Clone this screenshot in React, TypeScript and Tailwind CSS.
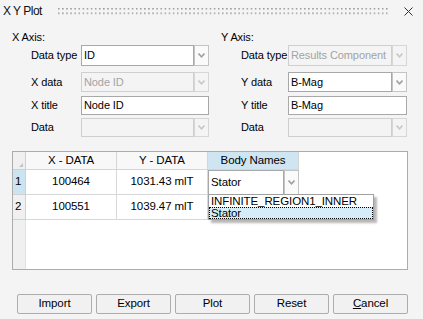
import type { ReactNode } from "react";

function Chevron({ dim = false }: { dim?: boolean }) {
  return (
    <svg width="7" height="5" viewBox="0 0 7 5">
      <path d="M0.5 0.5 L3.5 3.8 L6.5 0.5" fill="none" stroke={dim ? "#c8c8c8" : "#a0a0a0"} strokeWidth="1.6" />
    </svg>
  );
}

interface ComboProps {
  value?:    string;
  width:     number;   // total width incl. button
  height?:   number;
  disabled?: boolean;
}

function Combo({ value = "", width, height = 21, disabled = false }: ComboProps) {
  return (
    <div className="flex" style={{ width, height }}>
      <div
        className={
          disabled
            ? "flex flex-1 items-center whitespace-nowrap border border-[#cfcfcf] bg-[#f4f4f4] pl-[2px] text-[#a3a3a3]"
            : "flex flex-1 items-center whitespace-nowrap border border-[#a8a8a8] bg-white pl-[2px]"
        }
      >
        {value}
      </div>
      <div
        className={
          disabled
            ? "flex w-[15px] items-center justify-center border border-[#d6d6d6] bg-[#f4f4f4]"
            : "flex w-[15px] items-center justify-center border border-[#c4c4c4] bg-[#fafafa]"
        }
      >
        <Chevron dim={disabled} />
      </div>
    </div>
  );
}

function TextBox({ value, width, height = 19 }: { value: string; width: number; height?: number }) {
  return (
    <div className="flex items-center border border-[#a8a8a8] bg-white pl-[2px]" style={{ width, height }}>
      {value}
    </div>
  );
}

function Row({ label, labelW, children, className = "" }: { label: string; labelW: number; children: ReactNode; className?: string }) {
  return (
    <div className={`flex items-center ${className}`}>
      <span className="shrink-0 whitespace-nowrap" style={{ width: labelW }}>{label}</span>
      {children}
    </div>
  );
}

const BUTTONS = ["Import", "Export", "Plot", "Reset"];

export default function App() {
  return (
    <div className="flex h-[319px] w-[423px] flex-col overflow-hidden bg-[#f4f4f4] font-['Liberation_Sans',Arial,sans-serif] text-[11px] tracking-[-0.1px] text-black">
      {/* title bar */}
      <div className="flex h-[22px] items-center pl-[3px] pr-[10px]">
        <span className="text-[12px] tracking-[-0.5px] text-[#111]">X Y Plot</span>
        <svg className="ml-[16px] mr-[10px]" width="332" height="7" viewBox="0 0 332 7">
          <defs>
            <pattern id="grip" width="4.1" height="4.5" patternUnits="userSpaceOnUse">
              <rect x="0" y="0" width="1.5" height="1.5" fill="#9a9a9a" />
            </pattern>
          </defs>
          <rect x="0" y="0" width="332" height="7" fill="url(#grip)" />
        </svg>
        <svg width="9" height="9" viewBox="0 0 9 9" className="ml-auto">
          <path d="M0.5 0.5 L8.5 8.5 M8.5 0.5 L0.5 8.5" stroke="#333" strokeWidth="1" />
        </svg>
      </div>

      {/* axis settings */}
      <div className="mt-[8px] flex">
        <div className="w-[209px] pl-[12px]">
          <div className="h-[14px] leading-[14px]">X Axis:</div>
          <div className="pl-[19px]">
            <Row label="Data type" labelW={50} className="mt-[1px]"><Combo value="ID" width={128} /></Row>
            <Row label="X data" labelW={50} className="mt-[6px]"><Combo value="Node ID" width={128} height={20} disabled /></Row>
            <Row label="X title" labelW={50} className="mt-[4px]"><TextBox value="Node ID" width={128} /></Row>
            <Row label="Data" labelW={50} className="mt-[3px]"><Combo width={128} height={19} disabled /></Row>
          </div>
        </div>
        <div className="pl-[12px]">
          <div className="h-[14px] leading-[14px]">Y Axis:</div>
          <div className="pl-[20px]">
            <Row label="Data type" labelW={47} className="mt-[1px]"><Combo value="Results Component" width={119} disabled /></Row>
            <Row label="Y data" labelW={47} className="mt-[6px]"><Combo value="B-Mag" width={119} height={20} /></Row>
            <Row label="Y title" labelW={47} className="mt-[4px]"><TextBox value="B-Mag" width={119} /></Row>
            <Row label="Data" labelW={47} className="mt-[3px]"><Combo width={119} height={19} disabled /></Row>
          </div>
        </div>
      </div>

      {/* grid */}
      <div className="relative mx-[12px] mt-[14px] flex h-[119px] w-[396px] flex-col border border-[#acacac] bg-white text-[11.5px]">
        <div className="flex h-[18px]">
          <div className="relative w-[13px] border-r border-b border-[#d0d0d0] bg-[#f0f0f0]">
            <svg className="absolute bottom-[2px] right-[2px]" width="4" height="4" viewBox="0 0 4 4">
              <path d="M4 0 L4 4 L0 4 Z" fill="#c4c4c4" />
            </svg>
          </div>
          <div className="flex w-[91px] items-center justify-center border-r border-b border-[#d5d5d5] bg-[#f8f8f8]">X - DATA</div>
          <div className="flex w-[91px] items-center justify-center border-r border-b border-[#d5d5d5] bg-[#f8f8f8]">Y - DATA</div>
          <div className="flex w-[91px] items-center justify-center border-r border-b border-[#d5d5d5] bg-[#cfe6f2]">Body Names</div>
          <div className="flex-1" />
        </div>

        {[
          { n: "1", x: "100464", y: "1031.43 mlT", sel: true },
          { n: "2", x: "100551", y: "1039.47 mlT", sel: false },
        ].map(r => (
          <div key={r.n} className="flex h-[25px]">
            <div className={r.sel
              ? "flex w-[13px] items-center border-r border-b border-[#d0d0d0] bg-[#cce4ef] pl-[2px]"
              : "flex w-[13px] items-center border-r border-b border-[#d0d0d0] bg-[#f0f0f0] pl-[2px]"}>
              {r.n}
            </div>
            <div className="flex w-[91px] items-center justify-center border-r border-b border-[#d8d8d8]">{r.x}</div>
            <div className="flex w-[91px] items-center justify-center border-r border-b border-[#d8d8d8]">{r.y}</div>
            <div className="w-[91px]">
              {r.sel && <Combo value="Stator" width={91} height={25} />}
            </div>
            <div className="flex-1" />
          </div>
        ))}

        <div className="flex flex-1">
          <div className="w-[13px] border-r border-[#e2e2e2] bg-[#f0f0f0]" />
          <div className="flex-1" />
        </div>

        {/* open drop-down list */}
        <div className="absolute left-[195px] top-[42px] w-[166px] border border-[#a0a0a0] bg-white shadow-[3px_3px_2px_rgba(0,0,0,0.28)]">
          <div className="h-[12px] pl-[2px] leading-[12px]">INFINITE_REGION1_INNER</div>
          <div className="h-[12px] border border-dotted border-black bg-[#d5edf9] pl-[1px] leading-[10px]">Stator</div>
        </div>
      </div>

      {/* buttons */}
      <div className="mt-[24px] flex gap-[4px] pl-[17px] text-[11.5px]">
        {BUTTONS.map(b => (
          <button key={b} className="h-[20px] w-[75px] rounded-[2px] border border-[#adadad] bg-[#f1f1f1]">
            {b}
          </button>
        ))}
        <button className="h-[20px] w-[75px] rounded-[2px] border border-[#adadad] bg-[#f1f1f1]">
          <span className="underline">C</span>ancel
        </button>
      </div>
    </div>
  );
}
